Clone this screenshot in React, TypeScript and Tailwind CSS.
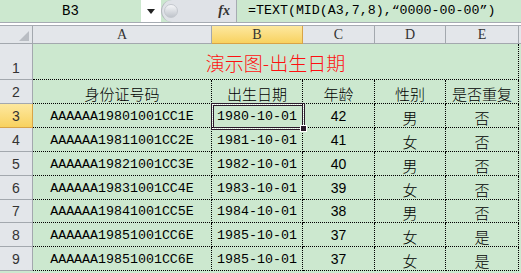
import React from 'react';

const cols = ['A', 'B', 'C', 'D', 'E'];

const rows = [
    ['AAAAAA19801001CC1E', '1980-10-01', '42', '男', '否'],
    ['AAAAAA19811001CC2E', '1981-10-01', '41', '女', '否'],
    ['AAAAAA19821001CC3E', '1982-10-01', '40', '男', '否'],
    ['AAAAAA19831001CC4E', '1983-10-01', '39', '女', '否'],
    ['AAAAAA19841001CC5E', '1984-10-01', '38', '男', '否'],
    ['AAAAAA19851001CC6E', '1985-10-01', '37', '女', '是'],
    ['AAAAAA19851001CC6E', '1985-10-01', '37', '女', '是'],
];

// row heights for rows 2..9
const heights = ['h-[24px]', 'h-[24px]', 'h-[24px]', 'h-[24px]', 'h-[24px]', 'h-[23px]', 'h-[24px]', 'h-[24px]'];

const mono = "font-['Liberation_Mono',monospace] text-[13.3px]";
const cjk = "font-['Noto_Sans_CJK_SC',sans-serif] font-light text-[15px]";
const sans = "font-['Liberation_Sans',sans-serif] text-[14px]";

const cell = 'flex items-end justify-center pb-[2px] border-b border-r border-dotted border-black leading-none';

const RowHead = ({ n, active, h }: { n: number; active?: boolean; h: string }) => (
    <div
        className={`${h} flex items-end justify-center pb-[4px] border-b border-r leading-none ${sans} text-[#333] ${
            active
                ? 'bg-gradient-to-b from-[#fde89e] to-[#f8d25e] border-[#d8a447]'
                : 'bg-[#e3e6ea] border-[#a3a8ae]'
        }`}
    >
        {n}
    </div>
);

export default function App() {
    return (
        <div className="w-[521px] h-[273px] overflow-hidden bg-[#cce8cf] relative select-none">
            {/* formula bar */}
            <div className="flex h-[23px] border-b border-[#a6abb2]">
                <div className={`w-[141px] flex items-center justify-center ${mono} text-[14px] text-black`}>B3</div>
                <div className="w-[20px] bg-white flex items-center justify-center">
                    <svg width="8" height="5" viewBox="0 0 8 5">
                        <polygon points="0,0 8,0 4,5" fill="#222" />
                    </svg>
                </div>
                <div className="w-[75px] bg-[#dfe2e7] rounded-l-full border-l border-[#b3b7bd] flex items-center justify-between pl-[2px] pr-[6px]">
                    <div className="w-[14px] h-[14px] rounded-full bg-gradient-to-b from-[#f6f7f9] to-[#bfc4cb] border border-[#c4c8ce]" />
                    <span className="font-['Liberation_Serif',serif] italic font-bold text-[14px] text-[#333] leading-none">
                        fx
                    </span>
                </div>
                <div className={`flex-1 border-l border-[#a6abb2] flex items-center pl-[11px] ${mono} text-[13.3px] text-black whitespace-nowrap`}>
                    =TEXT(MID(A3,7,8),“0000-00-00”)
                </div>
            </div>
            <div className="h-[3px] bg-white border-b border-[#a6abb2]" />

            {/* sheet grid */}
            <div className="grid grid-cols-[33px_179px_91px_72px_71px_73px_2px]">
                {/* column headers */}
                <div className="h-[18px] bg-[#e3e6ea] border-b border-r border-[#a3a8ae] relative">
                    <div className="absolute right-[3px] bottom-[2px] w-[10px] h-[10px] bg-[#b9bdc3] [clip-path:polygon(100%_0,100%_100%,0_100%)]" />
                </div>
                {cols.map((c) => (
                    <div
                        key={c}
                        className={`h-[18px] flex items-center justify-center border-b border-r font-['Liberation_Serif',serif] text-[14px] text-[#333] leading-none ${
                            c === 'B'
                                ? 'bg-gradient-to-b from-[#fde89e] to-[#f8d25e] border-[#d8a447]'
                                : 'bg-[#e3e6ea] border-[#a3a8ae]'
                        }`}
                    >
                        {c}
                    </div>
                ))}
                <div className="h-[18px] bg-[#e3e6ea] border-b border-[#a3a8ae]" />

                {/* row 1: title */}
                <RowHead n={1} h="h-[36px]" />
                <div
                    className={`col-span-5 h-[36px] flex items-center justify-center pt-[1px] border-b border-r border-dotted border-black ${cjk} text-[19px] text-[#ff1010] leading-none`}
                >
                    演示图-出生日期
                </div>
                <div className="h-[36px]" />

                {/* row 2: headings */}
                <RowHead n={2} h={heights[0]} />
                {['身份证号码', '出生日期', '年龄', '性别', '是否重复'].map((t) => (
                    <div key={t} className={`${heights[0]} ${cell} ${cjk} text-black`}>
                        {t}
                    </div>
                ))}
                <div className={heights[0]} />

                {/* data rows */}
                {rows.map((r, i) => {
                    const h = heights[i + 1];
                    return (
                        <React.Fragment key={i}>
                            <RowHead n={i + 3} h={h} active={i === 0} />
                            <div className={`${h} ${cell} ${mono} text-black pb-[4px]`}>{r[0]}</div>
                            <div className={`${h} ${cell} ${mono} text-black pb-[4px]`}>{r[1]}</div>
                            <div className={`${h} ${cell} ${sans} text-black pb-[4px]`}>{r[2]}</div>
                            <div className={`${h} ${cell} ${cjk} text-black`}>{r[3]}</div>
                            <div className={`${h} ${cell} ${cjk} text-black`}>{r[4]}</div>
                            <div className={h} />
                        </React.Fragment>
                    );
                })}
            </div>

            {/* active cell selection B3 */}
            <div className="absolute left-[211px] top-[103px] w-[94px] h-[27px] border border-[#2b1a2b] pointer-events-none">
                <div className="w-full h-full border border-dotted border-white">
                    <div className="w-full h-full border border-[#2b1a2b]" />
                </div>
            </div>
            <div className="absolute left-[300px] top-[125px] w-[7px] h-[7px] bg-[#2b1a2b] border border-white" />
        </div>
    );
}
